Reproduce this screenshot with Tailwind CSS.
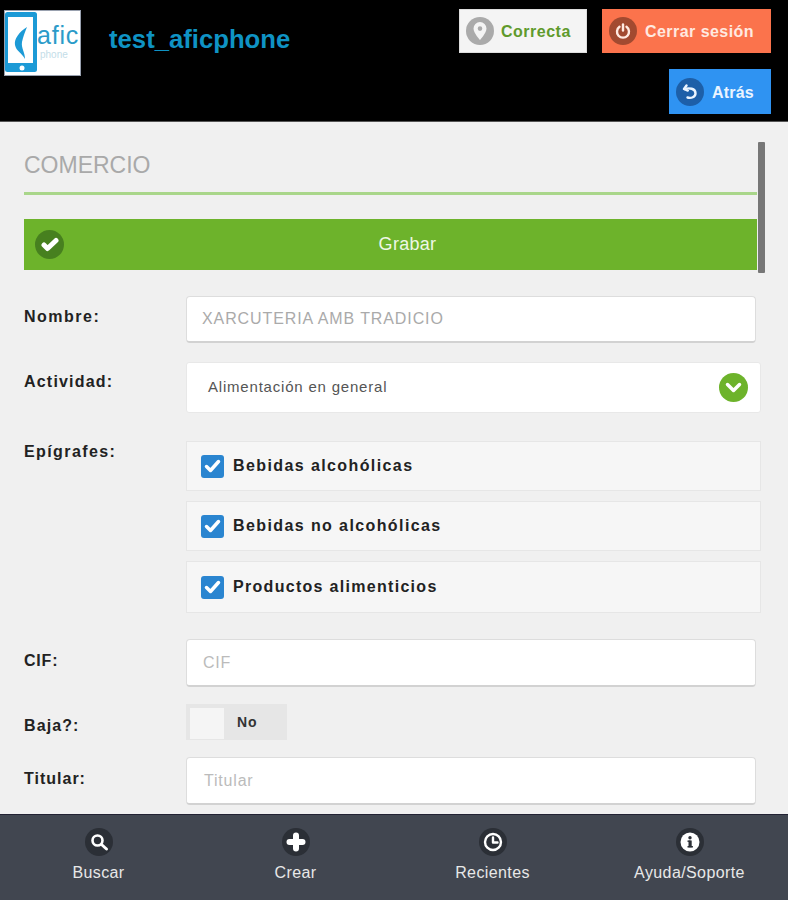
<!DOCTYPE html>
<html lang="es">
<head>
  <meta charset="UTF-8" />
  <meta name="viewport" content="width=device-width,initial-scale=1" />
  <title>test_aficphone</title>
  <script src="https://cdn.jsdelivr.net/npm/@tailwindcss/browser@4"></script>
</head>
<body class="bg-[#f0f0f0] font-['Liberation_Sans',sans-serif]">
<div class="relative w-[788px] h-[900px] overflow-hidden flex flex-col">

  <!-- Header -->
  <header class="h-[122px] shrink-0 bg-black border-b border-[#555] flex justify-between">
    <div class="flex items-start pl-[4px] pt-[10px]">
      <div class="w-[77px] h-[66px] bg-white border border-gray-400 flex items-center overflow-hidden">
        <svg width="75" height="64" viewBox="0 0 75 64">
          <rect x="0" y="1" width="32" height="60" rx="2.500" fill="#1c9ad6"/>
          <rect x="3" y="6" width="25" height="46" fill="#fff"/>
          <circle cx="17" cy="57" r="2.500" fill="#fff"/>
          <path d="M22 16C14 21 9 28 10 34C11 40 17 42 20 48C20 41 16 37 17 31C18 26 20 21 22 16Z" fill="#1c9ad6"/>
          <text x="32" y="33" font-size="25" letter-spacing="0.8" fill="#2b9bc9" font-family="Liberation Sans">afic</text>
          <text x="35" y="47" font-size="10" fill="#c3dde8" font-family="Liberation Sans">phone</text>
        </svg>
      </div>
      <div class="ml-[28px] mt-[14px] text-[25.700px] leading-[30px] font-bold text-[#0f93c4]">test_aficphone</div>
    </div>
    <div class="flex flex-col items-end pr-[17px] pt-[9px] gap-[16px]">
      <div class="flex gap-[15px]">
        <div class="w-[128px] h-[44px] bg-[#f4f4f4] border border-[#ddd] flex items-center pl-[6px] gap-[7px] text-[16px] font-bold tracking-[0.5px] text-[#5f9a2c]">
          <span class="w-[28px] h-[28px] rounded-full bg-[#aaa] flex items-center justify-center">
            <svg width="14" height="18" viewBox="0 0 14 18"><path fill-rule="evenodd" d="M7 0a6.500 6.500 0 0 1 6.500 6.500C13.500 11 7 18 7 18S.5 11 .5 6.500A6.500 6.500 0 0 1 7 0Zm0 4.300a2.300 2.300 0 1 0 0 4.600 2.300 2.300 0 0 0 0-4.600Z" fill="#f4f4f4"/></svg>
          </span>
          <span class="mt-[2px]">Correcta</span>
        </div>
        <div class="w-[169px] h-[44px] bg-[#fb734c] flex items-center pl-[7px] gap-[8px] text-[16px] font-bold tracking-[0.45px] text-[#ffe9e0]">
          <span class="w-[28px] h-[28px] rounded-full bg-[#a24a30] flex items-center justify-center">
            <svg width="16" height="16" viewBox="0 0 16 16" fill="none" stroke="#ffe9e0" stroke-width="2.400" stroke-linecap="round"><path d="M8 1.500v6"/><path d="M4.500 3.800a6 6 0 1 0 7 0"/></svg>
          </span>
          <span class="mt-[2px]">Cerrar sesión</span>
        </div>
      </div>
      <div class="w-[102px] h-[45px] bg-[#2f93f2] flex items-center pl-[7px] gap-[8px] text-[16px] font-bold tracking-[0.2px] text-[#eaf4ff]">
        <span class="w-[28px] h-[28px] rounded-full bg-[#1d5fa8] flex items-center justify-center">
          <svg width="16" height="16" viewBox="0 0 16 16" fill="none" stroke="#eaf4ff" stroke-width="2.400" stroke-linecap="round" stroke-linejoin="round"><path d="M4.500 1.500 2 5l3.800 1.600"/><path d="M2.500 5C7 3.600 13.500 4.400 13.500 9.200c0 3.800-4.500 5.500-8 4.300"/></svg>
        </span>
        <span class="mt-[2px]">Atrás</span>
      </div>
    </div>
  </header>

  <!-- Content -->
  <main class="flex-1 relative overflow-hidden pl-[24px]">
    <div class="absolute right-[23px] top-[20px] w-[7px] h-[131px] bg-[#777] rounded-[1px]"></div>

    <div class="w-[733px] h-[73px] pt-[29px] border-b-[3px] border-[#a9d68a]">
      <h1 class="text-[23px] leading-[28px] text-[#a9a9a9]">COMERCIO</h1>
    </div>

    <div class="mt-[24px] w-[733px] h-[51px] bg-[#6db32b] flex items-center relative">
      <span class="absolute left-[11px] w-[29px] h-[29px] rounded-full bg-[#47801f] flex items-center justify-center">
        <svg width="18" height="15" viewBox="0 0 18 15" fill="none" stroke="#fff" stroke-width="5" stroke-linecap="round" stroke-linejoin="round"><path d="m3 8 3.500 3.500L15 3.500"/></svg>
      </span>
      <span class="w-full pl-[34px] text-center text-[18px] tracking-[0.3px] text-[#eef7e6] -mt-[1px]">Grabar</span>
    </div>

    <div class="mt-[26px] flex items-start">
      <label class="w-[162px] pt-[11px] text-[16px] leading-[20px] font-bold tracking-[1.500px] text-[#222]">Nombre:</label>
      <div class="w-[570px] h-[47px] bg-white rounded-[4px] border border-[#ddd] border-b-2 border-b-[#d2d2d2] flex items-center pl-[15px] text-[16px] tracking-[0.9px] text-[#aaa]">XARCUTERIA AMB TRADICIO</div>
    </div>

    <div class="mt-[19px] flex items-start">
      <label class="w-[162px] pt-[10px] text-[16px] leading-[20px] font-bold tracking-[1.200px] text-[#222]">Actividad:</label>
      <div class="w-[575px] h-[51px] bg-white rounded-[3px] border border-[#e8e8e8] flex items-center justify-between pl-[21px] pr-[12px] text-[15px] tracking-[0.8px] text-[#555]">
        Alimentación en general
        <span class="w-[29px] h-[29px] rounded-full bg-[#6db32b] flex items-center justify-center">
          <svg width="17" height="12" viewBox="0 0 17 12" fill="none" stroke="#fff" stroke-width="3.500" stroke-linecap="round" stroke-linejoin="round"><path d="m2.500 2.500 6 6 6-6"/></svg>
        </span>
      </div>
    </div>

    <div class="mt-[28px] flex items-start">
      <label class="w-[162px] pt-[1px] text-[16px] leading-[20px] font-bold tracking-[1.400px] text-[#222]">Epígrafes:</label>
      <div class="flex flex-col gap-[10px]">
        <div class="w-[575px] h-[50px] bg-[#f6f6f6] border border-[#e6e6e6] flex items-center pl-[14px] gap-[9px] text-[16px] font-bold tracking-[1.400px] text-[#222]">
          <span class="w-[23px] h-[23px] rounded-[3px] bg-[#2a85d0] flex items-center justify-center">
            <svg width="17" height="14" viewBox="0 0 17 14" fill="none" stroke="#fff" stroke-width="3.500" stroke-linecap="round" stroke-linejoin="round"><path d="m2.500 7.500 4 4 8-9"/></svg>
          </span>
          Bebidas alcohólicas
        </div>
        <div class="w-[575px] h-[50px] bg-[#f6f6f6] border border-[#e6e6e6] flex items-center pl-[14px] gap-[9px] text-[16px] font-bold tracking-[1.400px] text-[#222]">
          <span class="w-[23px] h-[23px] rounded-[3px] bg-[#2a85d0] flex items-center justify-center">
            <svg width="17" height="14" viewBox="0 0 17 14" fill="none" stroke="#fff" stroke-width="3.500" stroke-linecap="round" stroke-linejoin="round"><path d="m2.500 7.500 4 4 8-9"/></svg>
          </span>
          Bebidas no alcohólicas
        </div>
        <div class="w-[575px] h-[52px] bg-[#f6f6f6] border border-[#e6e6e6] flex items-center pl-[14px] gap-[9px] text-[16px] font-bold tracking-[1.300px] text-[#222]">
          <span class="w-[23px] h-[23px] rounded-[3px] bg-[#2a85d0] flex items-center justify-center">
            <svg width="17" height="14" viewBox="0 0 17 14" fill="none" stroke="#fff" stroke-width="3.500" stroke-linecap="round" stroke-linejoin="round"><path d="m2.500 7.500 4 4 8-9"/></svg>
          </span>
          Productos alimenticios
        </div>
      </div>
    </div>

    <div class="mt-[26px] flex items-start">
      <label class="w-[162px] pt-[12px] text-[16px] leading-[20px] font-bold tracking-[0.8px] text-[#222]">CIF:</label>
      <div class="w-[570px] h-[48px] bg-white rounded-[4px] border border-[#ddd] border-b-2 border-b-[#d2d2d2] flex items-center pl-[16px] text-[16px] tracking-[0.8px] text-[#bbb]">CIF</div>
    </div>

    <div class="mt-[17px] flex items-start">
      <label class="w-[162px] pt-[12px] text-[16px] leading-[20px] font-bold tracking-[1.100px] text-[#222]">Baja?:</label>
      <div class="w-[101px] h-[36px] bg-[#e6e6e6] pl-[4px] pt-[4px] flex items-start text-[14px] leading-[20px] font-bold tracking-[1px] text-[#333]">
        <span class="w-[34px] h-[31px] bg-[#f5f5f5]"></span>
        <span class="ml-[13px] mt-[4px]">No</span>
      </div>
    </div>

    <div class="mt-[17px] flex items-start">
      <label class="w-[162px] pt-[12px] text-[16px] leading-[20px] font-bold tracking-[1px] text-[#222]">Titular:</label>
      <div class="w-[570px] h-[48px] bg-white rounded-[4px] border border-[#ddd] border-b-2 border-b-[#d2d2d2] flex items-center pl-[17px] text-[16px] tracking-[0.8px] text-[#bbb]">Titular</div>
    </div>
  </main>

  <!-- Footer nav -->
  <nav class="absolute left-0 bottom-0 w-full h-[86px] bg-[#414650] border-t border-[#223] grid grid-cols-4 text-[16px] text-[#e8e8e8] tracking-[0.4px]">
    <div class="flex flex-col items-center pt-[13px]">
      <span class="w-[28px] h-[28px] rounded-full bg-[#2b2f36] flex items-center justify-center">
        <svg width="20" height="20" viewBox="0 0 20 20" fill="none" stroke="#fff" stroke-linecap="round"><circle cx="8.500" cy="8.500" r="5" stroke-width="2.600"/><path d="m12.500 12.500 5 4.500" stroke-width="3"/></svg>
      </span>
      <span class="mt-[7px] leading-[20px]">Buscar</span>
    </div>
    <div class="flex flex-col items-center pt-[13px]">
      <span class="w-[28px] h-[28px] rounded-full bg-[#2b2f36] flex items-center justify-center">
        <svg width="20" height="20" viewBox="0 0 20 20" fill="none" stroke="#fff" stroke-width="6" stroke-linecap="round"><path d="M10 3.500v13M3.500 10h13"/></svg>
      </span>
      <span class="mt-[7px] leading-[20px]">Crear</span>
    </div>
    <div class="flex flex-col items-center pt-[13px]">
      <span class="w-[28px] h-[28px] rounded-full bg-[#2b2f36] flex items-center justify-center">
        <svg width="20" height="20" viewBox="0 0 20 20" fill="none" stroke="#fff" stroke-width="2.400" stroke-linecap="round" stroke-linejoin="round"><circle cx="10" cy="10" r="8"/><path d="M10 5.500V10.500H14.500"/></svg>
      </span>
      <span class="mt-[7px] leading-[20px]">Recientes</span>
    </div>
    <div class="flex flex-col items-center pt-[13px]">
      <span class="w-[28px] h-[28px] rounded-full bg-[#2b2f36] flex items-center justify-center">
        <svg width="20" height="20" viewBox="0 0 20 20"><circle cx="10" cy="10" r="9.500" fill="#fff"/><rect x="8.500" y="8.500" width="3.200" height="6.800" fill="#2b2f36"/><rect x="7.500" y="8.500" width="3" height="1.400" fill="#2b2f36"/><rect x="7.500" y="14" width="5.400" height="1.500" fill="#2b2f36"/><circle cx="10" cy="5.800" r="1.700" fill="#2b2f36"/></svg>
      </span>
      <span class="mt-[7px] leading-[20px]">Ayuda/Soporte</span>
    </div>
  </nav>
</div>
</body>
</html>
